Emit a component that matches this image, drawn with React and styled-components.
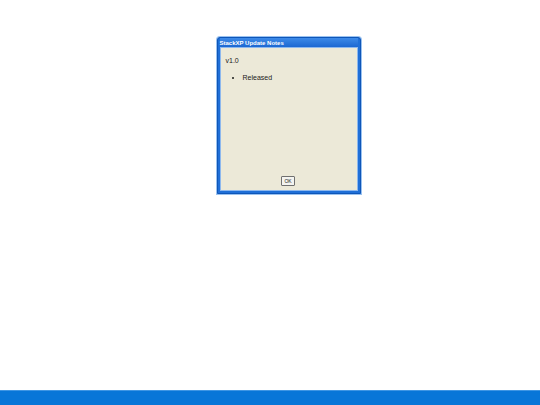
import React from "react";
import styled, { createGlobalStyle } from "styled-components";

const GlobalStyle = createGlobalStyle`
  html, body {
    margin: 0;
    padding: 0;
    height: 100%;
    background: #ffffff;
  }
  #root {
    height: 100%;
  }
`;

const StyledDesktop = styled.div`
  width: 540px;
  height: 405px;
  display: flex;
  flex-direction: column;
  font-family: "Liberation Sans", Arial, sans-serif;
`;

const StyledWorkArea = styled.div`
  flex: 1;
  display: flex;
  justify-content: center;
  padding-top: 37px;
  padding-left: 37px;
`;

const StyledWindow = styled.div`
  width: 138px;
  height: 153px;
  display: flex;
  flex-direction: column;
  background: #1f6fd8;
  border: 1px solid #0f56b8;
  border-radius: 3px 3px 0 0;
  padding: 0 2px 2px 2px;
  box-shadow: 0 0 0 1px #9ac2f0;
`;

const StyledTitleBar = styled.div`
  height: 9px;
  display: flex;
  align-items: center;
  color: #ffffff;
  font-size: 6px;
  font-weight: bold;
  background: linear-gradient(#3d8ae8, #1c68d2);
`;

const StyledBody = styled.div`
  flex: 1;
  display: flex;
  flex-direction: column;
  background: #ece9d8;
  border: 1px solid #8db8ee;
  padding: 9px 6px 4px 5px;
  color: #1a1a1a;
  font-size: 7px;
`;

const StyledVersion = styled.div`
  margin-bottom: 9px;
`;

const StyledList = styled.ul`
  margin: 0;
  padding-left: 17px;
  flex: 1;
  li {
    line-height: 9px;
  }
`;

const StyledFooter = styled.div`
  display: flex;
  justify-content: center;
`;

const StyledButton = styled.button`
  width: 14px;
  height: 10px;
  padding: 0;
  border: 1px solid #707070;
  border-radius: 1px;
  background: #f4f4f0;
  font-family: inherit;
  font-size: 5px;
  color: #222;
`;

const StyledTaskbar = styled.div`
  height: 14px;
  background: #0876d8;
  border-top: 1px solid #3f96e4;
`;

const App = () => (
  <>
    <GlobalStyle />
    <StyledDesktop>
      <StyledWorkArea>
        <StyledWindow>
          <StyledTitleBar>StackXP Update Notes</StyledTitleBar>
          <StyledBody>
            <StyledVersion>v1.0</StyledVersion>
            <StyledList>
              <li>Released</li>
            </StyledList>
            <StyledFooter>
              <StyledButton>OK</StyledButton>
            </StyledFooter>
          </StyledBody>
        </StyledWindow>
      </StyledWorkArea>
      <StyledTaskbar />
    </StyledDesktop>
  </>
);

export default App;
